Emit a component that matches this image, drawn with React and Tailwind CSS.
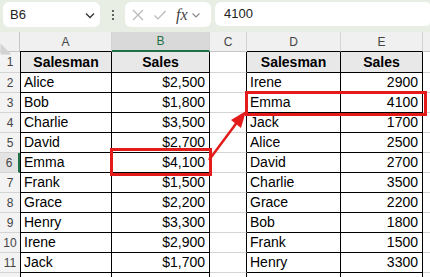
import React from 'react';

const left = [
  ['Alice', '$2,500'],
  ['Bob', '$1,800'],
  ['Charlie', '$3,500'],
  ['David', '$2,700'],
  ['Emma', '$4,100'],
  ['Frank', '$1,500'],
  ['Grace', '$2,200'],
  ['Henry', '$3,300'],
  ['Irene', '$2,900'],
  ['Jack', '$1,700'],
];

const right = [
  ['Irene', '2900'],
  ['Emma', '4100'],
  ['Jack', '1700'],
  ['Alice', '2500'],
  ['David', '2700'],
  ['Charlie', '3500'],
  ['Grace', '2200'],
  ['Bob', '1800'],
  ['Frank', '1500'],
  ['Henry', '3300'],
];

const cols = 'grid grid-cols-[20px_92px_98px_37px_94px_82px_1fr]';

const FormulaBar = () => (
  <div className="flex h-[32px] items-start bg-[#e9eee4] pt-[2px] pl-[3px]">
    <div className="flex h-[25px] w-[97px] items-center justify-between rounded-md bg-white pl-[7px] pr-[4px] text-[13px] text-[#222]">
      <span>B6</span>
      <svg width="12" height="12" viewBox="0 0 12 12" fill="none" stroke="#333" strokeWidth="1.3">
        <path d="M2 4.5l4 4 4-4" />
      </svg>
    </div>
    <div className="flex h-[25px] w-[25px] flex-col items-center justify-center gap-[2px]">
      <span className="h-[2px] w-[2px] rounded-full bg-[#333]" />
      <span className="h-[2px] w-[2px] rounded-full bg-[#333]" />
      <span className="h-[2px] w-[2px] rounded-full bg-[#333]" />
    </div>
    <div className="flex h-[25px] w-[86px] items-center rounded-md bg-white pl-[6px] pr-[2px]">
      <svg width="14" height="14" viewBox="0 0 14 14" fill="none" stroke="#b8b8b8" strokeWidth="1.2">
        <path d="M2 2l10 10M12 2L2 12" />
      </svg>
      <svg className="ml-[8px]" width="14" height="14" viewBox="0 0 14 14" fill="none" stroke="#b8b8b8" strokeWidth="1.2">
        <path d="M1.5 7.5l3.5 3.5 7.5-8" />
      </svg>
      <span className="ml-[9px] font-['Liberation_Serif',serif] text-[16px] italic leading-none text-[#444]">fx</span>
      <svg className="ml-[3px]" width="10" height="10" viewBox="0 0 10 10" fill="none" stroke="#888" strokeWidth="1.1">
        <path d="M1.5 3.5l3.5 3.5 3.5-3.5" />
      </svg>
    </div>
    <div className="ml-[4px] flex h-[24px] flex-1 items-center rounded-l-md rounded-r-sm bg-white pl-[9px] text-[13px] text-[#222]">
      4100
    </div>
  </div>
);

const ColHead = ({ label, active, tableEdge, extra = '' }) => (
  <div
    className={`flex h-[20px] items-center justify-center border-r border-[#d4d4d4] text-[12px] ${
      active
        ? 'border-b-2 border-b-[#1e7145] bg-[#d9d9d9] text-[#1e7145]'
        : tableEdge
        ? 'border-b border-b-black bg-[#f0f0f0] text-[#444]'
        : 'border-b border-b-[#c6c6c6] bg-[#f0f0f0] text-[#444]'
    } ${extra}`}
  >
    {label}
  </div>
);

const Row = ({ n, l, r, header, blank }) => {
  const selected = n === 6;
  const cell = header
    ? 'bg-[#e8e8e8] font-bold justify-center'
    : 'bg-white';
  return (
    <>
      <div
        className={`flex items-center justify-center border-b border-[#d4d4d4] text-[12px] text-[#444] ${
          selected ? 'border-r-2 border-r-[#1e7145] bg-[#e3e3e3] text-[#1e7145]' : 'bg-[#f3f3f3]'
        }`}
      >
        {blank ? '' : n}
      </div>
      <div className={`flex items-center border-l border-b border-r border-black px-[3px] ${cell}`}>{l[0]}</div>
      <div className={`flex items-center border-b border-r border-black px-[4px] ${header ? cell : 'justify-end bg-white'}`}>{l[1]}</div>
      <div className="border-b border-r border-b-[#d4d4d4] border-r-black bg-white" />
      <div className={`flex items-center border-b border-r border-black px-[3px] ${cell}`}>{r[0]}</div>
      <div className={`flex items-center border-b border-r border-black px-[4px] ${header ? cell : 'justify-end bg-white'}`}>{r[1]}</div>
      <div className="border-b border-[#d4d4d4] bg-white" />
    </>
  );
};

const Annotations = () => (
  <svg className="pointer-events-none absolute left-0 top-0" width="430" height="277" viewBox="0 0 430 277">
    <rect x="111.5" y="149.5" width="99" height="25" fill="none" stroke="#e31b1b" strokeWidth="3" />
    <rect x="246.5" y="92.5" width="179" height="22" fill="none" stroke="#e31b1b" strokeWidth="3" />
    <line x1="209" y1="160" x2="238" y2="121" stroke="#e31b1b" strokeWidth="2.5" />
    <polygon points="246,111 231,120 241,128" fill="#e31b1b" />
  </svg>
);

export default function App() {
  return (
    <div className="relative h-[277px] w-[430px] overflow-hidden bg-white font-['Liberation_Sans',Arial,sans-serif]">
      <FormulaBar />
      <div className={cols}>
        <div className="relative h-[20px] border-r border-b border-[#c6c6c6] bg-[#f0f0f0]">
          <div className="absolute bottom-[2px] right-[2px] h-0 w-0 border-l-[11px] border-t-[11px] border-l-transparent border-t-transparent border-b-[0px] border-r-[11px] border-r-[#d2d2d2] rotate-90" />
        </div>
        <ColHead label="A" tableEdge />
        <ColHead label="B" active />
        <ColHead label="C" />
        <ColHead label="D" tableEdge />
        <ColHead label="E" tableEdge />
        <ColHead label="" extra="border-r-0" />
      </div>
      <div className={`${cols} auto-rows-[20px] grid-rows-[21px] text-[14px] text-black`}>
        <Row n={1} l={['Salesman', 'Sales']} r={['Salesman', 'Sales']} header />
        {left.map((l, i) => (
          <Row key={i} n={i + 2} l={l} r={right[i]} />
        ))}
        <Row n={12} l={['', '']} r={['', '']} blank />
      </div>
      <Annotations />
    </div>
  );
}
